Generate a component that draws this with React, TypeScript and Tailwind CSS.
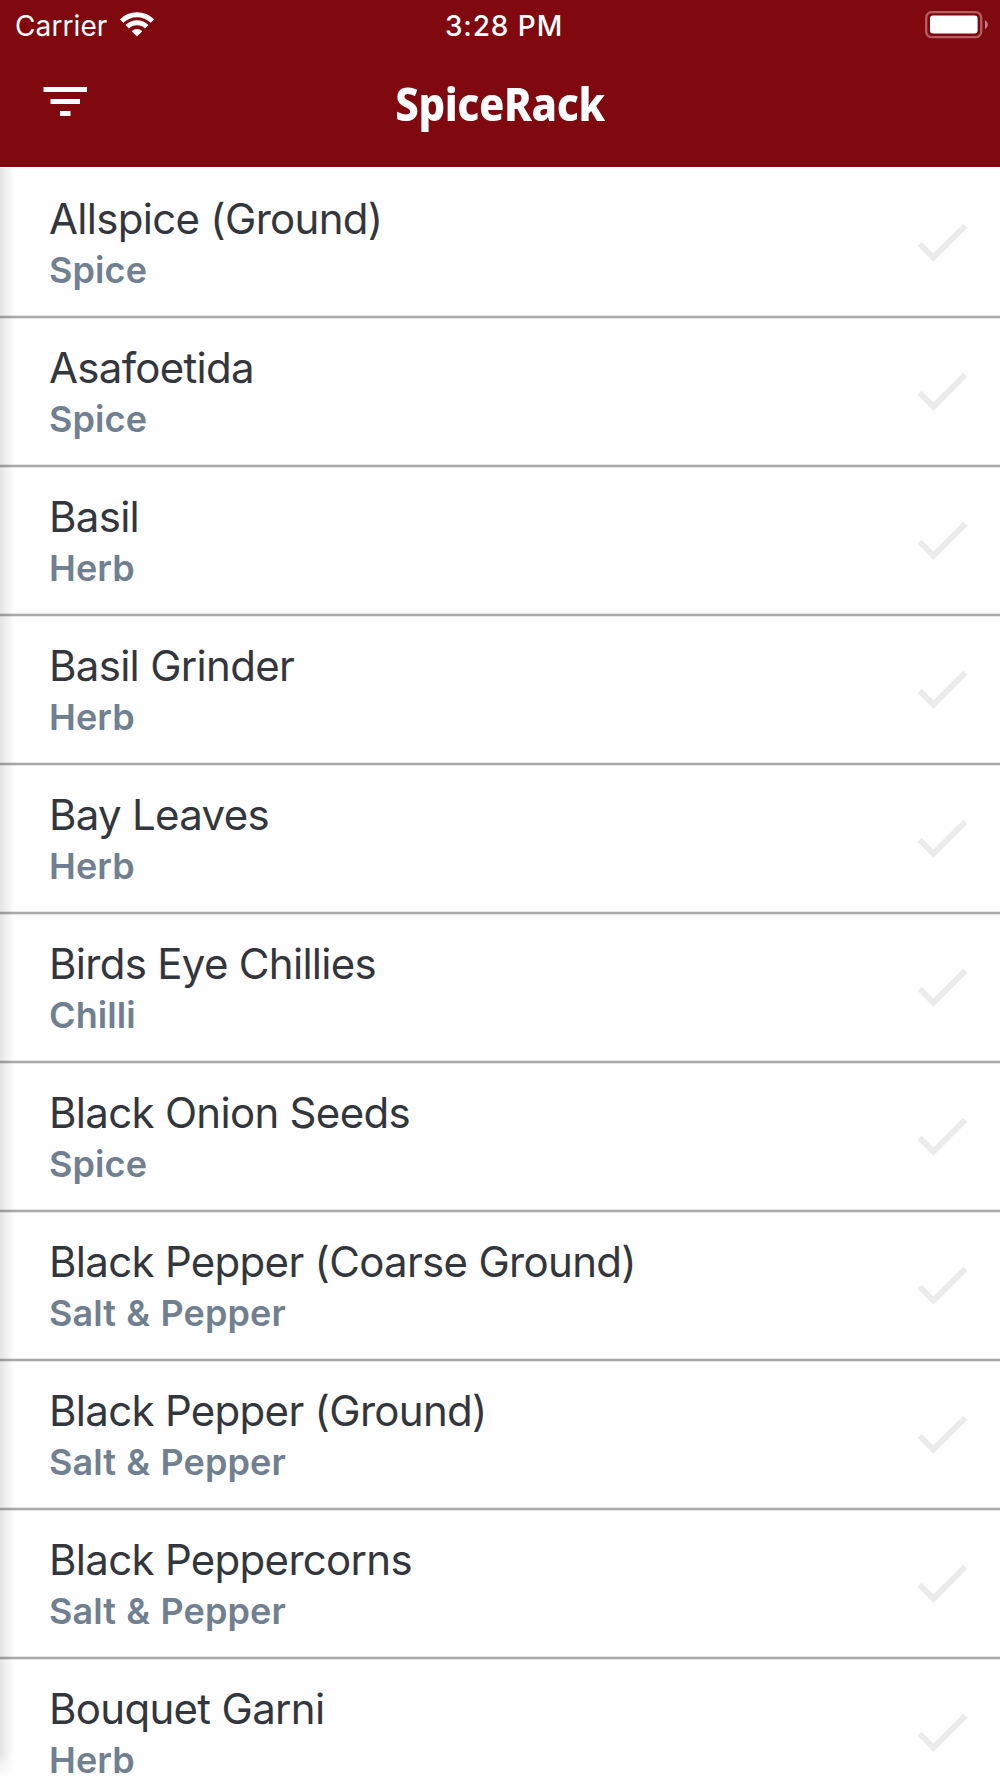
type Ingredient = { name: string; category: string }

const ingredients: Ingredient[] = [
  { name: 'Allspice (Ground)', category: 'Spice' },
  { name: 'Asafoetida', category: 'Spice' },
  { name: 'Basil', category: 'Herb' },
  { name: 'Basil Grinder', category: 'Herb' },
  { name: 'Bay Leaves', category: 'Herb' },
  { name: 'Birds Eye Chillies', category: 'Chilli' },
  { name: 'Black Onion Seeds', category: 'Spice' },
  { name: 'Black Pepper (Coarse Ground)', category: 'Salt & Pepper' },
  { name: 'Black Pepper (Ground)', category: 'Salt & Pepper' },
  { name: 'Black Peppercorns', category: 'Salt & Pepper' },
  { name: 'Bouquet Garni', category: 'Herb' },
]

function WifiIcon() {
  return (
    <svg className="mb-[2px] ml-[13px] h-[25px] w-[34px]" viewBox="0 0 34 25" fill="none" stroke="#fff">
      <path d="M1.6 9.1a21.8 21.8 0 0 1 30.8 0" strokeWidth="4.9" />
      <path d="M7.25 14.75a13.8 13.8 0 0 1 19.5 0" strokeWidth="4.9" />
      <path d="M11.7 19.2a7.5 7.5 0 0 1 10.6 0L17 24.6z" fill="#fff" stroke="none" />
    </svg>
  )
}

function BatteryIcon() {
  return (
    <svg className="h-[28px] w-[64px]" viewBox="0 0 64 28">
      <rect x="1.2" y="1.2" width="55" height="25" rx="5.5" fill="none" stroke="#b45f63" strokeWidth="2.3" />
      <rect x="5" y="4.6" width="47.6" height="18" rx="3" fill="#fff" />
      <path d="M60 9.2q2.8 1.4 2.8 4.5T60 18.2z" fill="#c38083" />
    </svg>
  )
}

function FilterIcon() {
  return (
    <svg className="h-[30px] w-[44px]" viewBox="0 0 44 30" fill="#fff">
      <path d="M.5 0H44v5H.5zM7.5 12H37v5H7.5zM17 24h10.5v5H17z" />
    </svg>
  )
}

function CheckIcon() {
  return (
    <svg className="h-[40px] w-[51px]" viewBox="0 0 51 40" fill="none" stroke="#ebebeb" strokeWidth="5.8">
      <path d="M2.6 21.8 16.4 35.6 48.3 3.8" />
    </svg>
  )
}

function StatusBar() {
  return (
    <div className="grid h-[50px] grid-cols-3 items-center pl-[15px] pr-[11px] text-[28px] leading-none text-white">
      <div className="flex items-center">
        <span className="pt-[1px] tracking-[0.1px]">Carrier</span>
        <WifiIcon />
      </div>
      <span className="pl-[4px] pt-[1px] text-center font-medium tracking-[0.9px]">3:28 PM</span>
      <div className="flex justify-end">
        <BatteryIcon />
      </div>
    </div>
  )
}

function NavBar() {
  return (
    <div className="grid grid-cols-[200px_1fr_200px] items-start pt-[24px]">
      <div className="pl-[43px] pt-[13px]">
        <FilterIcon />
      </div>
      <h1 className="origin-center scale-x-[0.91] text-center font-['Noto_Sans'] text-[46px] font-extrabold leading-[58px] tracking-[-0.4px] text-white">
        SpiceRack
      </h1>
    </div>
  )
}

function Row({ name, category }: Ingredient) {
  return (
    <li className="flex h-[148.98px] shrink-0 items-center justify-between border-b-[2px] border-[#a9a9a9] pl-[49px] pr-[32px] shadow-[0_1px_0_#e6e6e6,inset_0_-1px_0_#e6e6e6]">
      <div className="pt-[4px]">
        <div className="text-[42px] leading-[50px] tracking-[-0.7px] text-[#33373d]">{name}</div>
        <div className="pb-[6px] pt-[8px] text-[36px] font-semibold leading-[36px] tracking-[0.1px] text-[#708090] [word-spacing:1px]">{category}</div>
      </div>
      <CheckIcon />
    </li>
  )
}

export default function App() {
  return (
    <div className="relative flex h-[1778px] w-[1000px] flex-col overflow-hidden bg-[#fefefe] font-['Inter',sans-serif]">
      <header className="h-[167px] shrink-0 bg-[#80080f]">
        <StatusBar />
        <NavBar />
      </header>
      <ul className="flex min-h-0 flex-1 flex-col overflow-hidden pt-[2px]">
        {ingredients.map(item => <Row key={item.name} {...item} />)}
      </ul>
      <div className="absolute bottom-0 left-0 top-[168px] w-[14px] bg-gradient-to-r from-black/10 to-transparent [mask-image:linear-gradient(to_top,transparent,black_24px)]" />
    </div>
  )
}
